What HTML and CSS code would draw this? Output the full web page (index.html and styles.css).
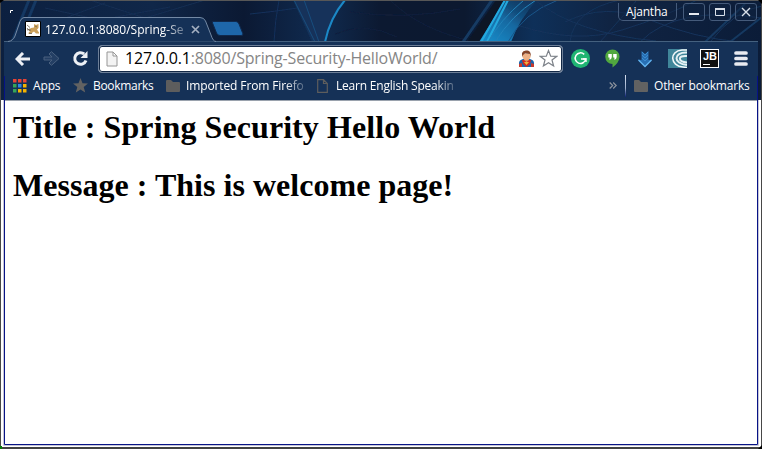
FILE: index.html
```html
<!DOCTYPE html>
<html lang="en">
<head>
<meta charset="utf-8">
<title>127.0.0.1:8080/Spring-Security-HelloWorld/</title>
<link rel="stylesheet" href="styles.css">
</head>
<body>
<div class="window">
  <svg class="wallpaper" width="762" height="100" viewBox="0 0 762 100">
    <defs>
      <linearGradient id="sky"><stop offset="0" stop-color="#0c2040"/><stop offset=".2" stop-color="#102749"/><stop offset=".32" stop-color="#0b1933"/><stop offset=".42" stop-color="#102b50"/><stop offset=".5" stop-color="#0c1931"/><stop offset=".61" stop-color="#0c1930"/><stop offset=".7" stop-color="#0e3059"/><stop offset=".8" stop-color="#102443"/><stop offset="1" stop-color="#0b1c38"/></linearGradient>
      <linearGradient id="ray" x1="0" y1="1" x2="1" y2="0"><stop offset="0" stop-color="#1a91d0"/><stop offset=".5" stop-color="#1668a0"/><stop offset="1" stop-color="#14426f" stop-opacity=".2"/></linearGradient>
      <filter id="soft"><feGaussianBlur stdDeviation=".7"/></filter>
    </defs>
    <rect width="762" height="100" fill="url(#sky)"/>
    <g fill="none" filter="url(#soft)">
      <path d="M12 42L29 0M19 42L36 0" stroke="#123762" stroke-width="3"/>
      <path d="M45 8L100 20 170 7M90 0L145 18 205 0M60 20L105 3" stroke="#152e53"/>
      <path d="M274 42Q275 20 279 0M250 14Q300 9 340 0" stroke="#14305a"/>
      <path d="M293 0L312 42H326Q329 20 344 0Z" fill="#12325a"/>
      <path d="M294 0L315 42M304 0L319 42" stroke="#184d7e"/>
      <path d="M325 42Q330 18 345 0" stroke="#1b88c6" stroke-width="2"/>
      <path d="M350 12Q405 20 460 9M335 34Q365 21 397 37M390 0Q420 30 475 42" stroke="#101f3d"/>
      <path d="M463 42L492 0" stroke="#153a64" stroke-width="3"/>
      <path d="M467 42L496 0H504L480 42Z" fill="#0b1428"/>
      <path d="M479 42L505 0H537Q519 20 511 42Z" fill="url(#ray)"/>
      <path d="M481 42L505 0M487 42L508 0" stroke="#23a9df" stroke-width="2"/>
      <path d="M495 42Q512 15 536 0M488 42Q500 20 524 0" stroke="#2282b9"/>
      <path d="M508 42Q523 13 558 0" stroke="#1a5488"/>
      <path d="M520 26Q577 44 622 30T697 0M535 0Q575 33 656 41M570 42Q573 10 620 0M640 42Q676 5 762 18M565 22Q605 2 650 20T740 42M600 42L637 0M710 42Q735 10 762 6" stroke="#15335b"/>
      <path d="M705 42L745 4M730 42L762 17" stroke="#143961" stroke-width="2"/>
    </g>
  </svg>
  <header class="titlebar">
    <div class="tab">
      <svg class="tab-shape" width="208" height="25" viewBox="0 0 208 25"><path d="M0 24.500Q5 24 7 19L12 4.500Q13.500.5 16 .5H192Q196 .5 197.500 4L203 18Q205 24.500 208 24.500" fill="#153157" stroke="#7389a5"/></svg>
      <svg class="favicon" width="16" height="16" viewBox="0 0 16 16"><path d="M.5.5H15.500V15.500H.5Z" fill="#fff" stroke="#000"/><path d="M3.500 9L6 7 9 6.500 9 3 11 4 13.500 3V7L12 8.500 14 11.500V12.500H11L9 10.500 6 12.500H3L5 10Z" fill="#cba05a"/><path d="M2 4L5 6.500M2 9L5 8M4 12.500H7M10 5L12 6M2 7Q4 11 6 9" stroke="#6c6250" stroke-width=".8" fill="none"/></svg>
      <span class="tab-title">127.0.0.1:8080/Spring-Se</span>
      <svg class="tab-close" width="9" height="9" viewBox="0 0 9 9"><path d="M1 1L8 8M8 1L1 8" stroke="#a3afc0" stroke-width="1.700"/></svg>
    </div>
    <svg class="new-tab" width="32" height="15" viewBox="0 0 32 15"><path d="M1 .5H24Q26 .5 27 3L31 13Q31 14.500 29 14.500H8Q5.500 14.500 4.500 12L.5 2Q0 .5 1 .5Z" fill="#1e67aa" stroke="#10294d"/></svg>
    <div class="controls">
      <div class="user"><span class="t-user">Ajantha</span></div>
      <div class="control"><svg width="22" height="16"><path d="M6 10H16" stroke="#e5e9ef" stroke-width="2"/></svg></div>
      <div class="control"><svg width="22" height="16"><path d="M6.500 4.500H15.500V11.500H6.500Z" fill="none" stroke="#d9e0e9"/><path d="M6 5H16" stroke="#d9e0e9" stroke-width="2"/></svg></div>
      <div class="control"><svg width="22" height="16"><path d="M7 4L15 12M15 4L7 12" stroke="#d9e0e9" stroke-width="1.400"/></svg></div>
    </div>
  </header>
  <nav class="chrome">
    <div class="toolbar">
      <svg class="back" width="16" height="14" viewBox="0 0 16 14"><path d="M15 7H3M8 1L2 7 8 13" fill="none" stroke="#edf0f5" stroke-width="3"/></svg>
      <svg class="forward" width="17" height="15" viewBox="0 0 17 15"><path d="M1 6H9L6 3 8.500.7 16 7.500 8.500 14.300 6 12 9 9H1Z" fill="#243f64" stroke="#4a617f"/></svg>
      <svg class="reload" width="17" height="17" viewBox="0 0 17 17"><path d="M12.200 4A5.800 5.800 0 1 0 14 10.500" fill="none" stroke="#edf0f5" stroke-width="3"/><path d="M15.500 1V8H8.500Z" fill="#edf0f5"/></svg>
      <div class="omnibox">
        <svg class="page" width="12" height="16" viewBox="0 0 12 16"><path d="M1 1H7L11 5V15H1ZM7 1V5H11" fill="#f3f3f3" stroke="#969696"/></svg>
        <span class="url"><b>127.0.0.1</b>:8080/Spring-Security-HelloWorld/</span>
        <svg class="hero" width="17" height="18" viewBox="0 0 17 18"><path d="M1 17V13Q1 10 5 9H12Q16 10 16 13V17Z" fill="#1764ae"/><path d="M1 14L4 13V17H1ZM13 13L16 14V17H13Z" fill="#c83a2e"/><path d="M4 10H13L12 14 8.500 17 5 14Z" fill="#cf2922"/><path d="M6 12H11L8.500 15Z" fill="#efb23b"/><path d="M6 8H11V10L8.500 12 6 10Z" fill="#d69465"/><path d="M4.500 4H12.500V7Q12 10 8.500 10T4.500 7Z" fill="#edb186"/><path d="M4 7V3Q5 0 9 .5 13 0 13 7L12 4 7 3.500 5 5Z" fill="#84452a"/></svg>
        <svg class="star" width="19" height="19" viewBox="0 0 19 19"><path d="M9.500 1.500L11.700 7.200 17.800 7.300 13 11 14.600 17 9.500 13.700 4.400 17 6 11 1.200 7.300 7.300 7.200Z" fill="#fff" stroke="#7d8289" stroke-width="1.200"/></svg>
      </div>
      <div class="extensions">
        <svg width="19" height="19" viewBox="0 0 19 19"><circle cx="9.500" cy="9.500" r="9.500" fill="#20b573"/><path d="M13.200 5.400A5.300 5.300 0 1 0 14.700 10H10" fill="none" stroke="#fff" stroke-width="1.500"/><path d="M12 10H15V13" fill="none" stroke="#fff" stroke-width="1.400"/></svg>
        <svg width="15" height="19" viewBox="0 0 15 19"><path d="M7.500.5A7 7 0 0 1 14.500 8Q14 14 7.500 18.500V15A7 7 0 0 1 7.500.5Z" fill="#51a83f"/><path d="M3.300 5H6.800V8Q6.800 10 4.500 11V8.500H3.300ZM8.200 5H11.700V8Q11.700 10 9.400 11V8.500H8.200Z" fill="#fff"/></svg>
        <svg width="16" height="18" viewBox="0 0 16 18"><path d="M4.500 1L8 4 11.500 1V10L15 9.500 8 17 1 9.500 4.500 10Z" fill="#286fb4"/><path d="M5 2L8 5 11 2M5 5L8 8 11 5M5 8L8 11 11 8" fill="none" stroke="#3a8bd0"/><path d="M1.500 10L8 16.500 14.500 10" fill="none" stroke="#62b4f0" stroke-width="1.300"/></svg>
        <svg width="19" height="19" viewBox="0 0 19 19"><path d="M0 0H19V19H0Z" fill="#40869a"/><path d="M19 1H14C1 2 2 17 15 18L19 18.500" fill="none" stroke="#f2f8f9" stroke-width="1.600"/><path d="M19 3.500C5 3 5 15 19 16M19 7C9 6 10 13 19 13.500" fill="none" stroke="#e5f1f4" stroke-width="2"/></svg>
        <div class="jb"><span>JB</span><i></i></div>
        <svg width="14" height="15" viewBox="0 0 14 15"><path d="M2 2H12M2 7.500H12M2 13H12" stroke="#e9ebf1" stroke-width="3.700" stroke-linecap="round"/></svg>
      </div>
    </div>
    <div class="bookmarks">
      <a class="bm apps"><svg width="14" height="14" viewBox="0 0 14 14"><path d="M0 0H3.500V3.500H0ZM5 0H8.500V3.500H5ZM10 0H13.500V3.500H10Z" fill="#e84335"/><path d="M0 5H3.500V8.500H0ZM0 10H3.500V13.500H0Z" fill="#36a558"/><path d="M5 5H8.500V8.500H5Z" fill="#3288e5"/><path d="M10 5H13.500V8.500H10ZM5 10H8.500V13.500H5ZM10 10H13.500V13.500H10Z" fill="#f5b400"/></svg><span class="t-apps">Apps</span></a>
      <a class="bm marks"><svg width="15" height="15" viewBox="0 0 15 15"><path d="M7.500 0L9.500 5.300 15 5.500 10.700 9 12.200 14.500 7.500 11.400 2.800 14.500 4.300 9 0 5.500 5.500 5.300Z" fill="#626262"/></svg><span class="t-marks">Bookmarks</span></a>
      <a class="bm imported"><svg width="14" height="12" viewBox="0 0 14 12"><path d="M0 1Q0 0 1 0H5L7 2H13Q14 2 14 3V11Q14 12 13 12H1Q0 12 0 11Z" fill="#5d5d5d"/></svg><span class="t-imported fade">Imported From Firefo</span></a>
      <a class="bm learn"><svg width="11" height="14" viewBox="0 0 11 14"><path d="M.7.7H6.500L10.300 4.500V13.300H.7ZM6.500.7V4.500H10.300" fill="none" stroke="#5d5d5d" stroke-width="1.200"/></svg><span class="t-learn fade">Learn English Speakin</span></a>
      <svg class="more" width="8" height="7" viewBox="0 0 8 7"><path d="M.7.5L3.700 3.500.7 6.500M4.200.5L7.200 3.500 4.200 6.500" fill="none" stroke="#8c939d" stroke-width="1.200"/></svg>
      <i class="divider"></i>
      <a class="bm other"><svg width="14" height="12" viewBox="0 0 14 12"><path d="M0 1Q0 0 1 0H5L7 2H13Q14 2 14 3V11Q14 12 13 12H1Q0 12 0 11Z" fill="#626262"/></svg><span class="t-other">Other bookmarks</span></a>
    </div>
  </nav>
  <main class="content">
    <h1 class="title">Title : Spring Security Hello World</h1>
    <h1 class="message">Message : This is welcome page!</h1>
  </main>
  <svg class="frame" width="762" height="449" viewBox="0 0 762 449"><path d="M0 .5H762" stroke="#575757"/><path d="M.5 1V449M761.500 1V449" stroke="#484848"/><path d="M0 448H762" stroke="#424242" stroke-width="2"/><path d="M3.500 100V445.500H758.500V100" fill="none" stroke="#c6c6d8"/><path d="M4.500 76V444.500H757.500V76" fill="none" stroke="#071386"/><path d="M0 0H4L0 3ZM762 0H758L762 4ZM762 445V449H758Z" fill="#000"/><path d="M0 446H2V449H0Z" fill="#057b08"/><path d="M10.500 13V10.500H13" stroke="#fff" fill="none"/></svg>
</div>
</body>
</html>
```
FILE: styles.css
```css
* { box-sizing: border-box; }
body { margin: 0; overflow: hidden; }
svg { display: block; flex: none; }
.window { position: relative; width: 762px; height: 449px; background: #fff; }
.wallpaper, .frame { position: absolute; top: 0; left: 0; }
.titlebar { position: relative; display: flex; height: 41px; font-family: "Open Sans", sans-serif; }
.tab { position: relative; z-index: 2; display: flex; align-items: center; width: 208px; height: 25px; margin: 17px 0 0 8px; padding: 0 0 1px 17px; }
.tab-shape { position: absolute; top: 0; left: 0; }
.favicon { position: relative; }
.tab-title { position: relative; width: 140px; margin-left: 4px; font-size: 12px; white-space: nowrap; color: #fff; -webkit-mask-image: linear-gradient(90deg, #000 84%, rgba(0,0,0,.3)); mask-image: linear-gradient(90deg, #000 84%, rgba(0,0,0,.3)); }
.tab-close { position: relative; margin-left: 6px; }
.new-tab { margin: 21px 0 0 -4px; }
.controls { display: flex; gap: 4px; margin: 3px 5px 0 auto; }
.user, .control { height: 18px; border: 1px solid #455b7b; border-radius: 3px; background: rgba(16,35,65,.5); }
.user { width: 59px; margin-right: 2px; padding-left: 7px; border-top: 0; border-radius: 0 0 5px 5px; color: #fff; font-size: 12px; line-height: 17px; }
.t-user { letter-spacing: -.2px; }
.control { width: 22px; overflow: hidden; }
.control svg { margin-left: -1px; }
.chrome { position: relative; width: 754px; height: 60px; margin-left: 4px; background: #153157; border-top: 1px solid #45617f; border-bottom: 1px solid #9aa2ad; font-family: "Open Sans", sans-serif; }
.toolbar { display: flex; align-items: center; height: 33px; padding-left: 11px; }
.forward { margin-left: 12px; }
.reload { margin-left: 12px; }
.omnibox { display: flex; align-items: center; width: 465px; height: 28px; margin-left: 9px; padding-left: 7px; background: #fff; border: 1px solid #6d7f98; border-radius: 4px; box-shadow: inset 0 0 0 1px #122745; }
.url { width: 312px; margin-left: 7px; padding-bottom: 1px; font-size: 16px; letter-spacing: -.2px; white-space: nowrap; color: #858585; }
.url b { font-weight: 400; color: #000; }
.hero { margin-left: 81px; }
.star { margin-left: 4px; }
.extensions { display: flex; align-items: center; margin-left: 8px; }
.extensions > :nth-child(2) { margin-left: 15px; }
.extensions > :nth-child(3) { margin-left: 17px; }
.extensions > :nth-child(4) { margin-left: 15px; }
.extensions > :nth-child(5) { margin-left: 13px; }
.extensions > :nth-child(6) { margin-left: 15px; }
.jb { width: 19px; height: 19px; padding: 2px; background: #101010; border: 1px solid #fff; color: #fff; font: bold 11px/9px "Liberation Sans", sans-serif; }
.jb span { display: block; }
.jb i { display: block; width: 7px; height: 1px; margin-top: 3px; background: #fff; }
.bookmarks { display: flex; align-items: center; height: 21px; padding-left: 9px; font-size: 12px; color: #fff; }
.bm { display: flex; align-items: center; white-space: nowrap; }
.apps { width: 60px; gap: 6px; }
.marks { width: 93px; gap: 5px; }
.imported { width: 151px; gap: 6px; }
.learn { width: 137px; gap: 8px; }
.t-apps { letter-spacing: -.15px; }
.t-marks { letter-spacing: -.3px; }
.t-imported { letter-spacing: -.12px; }
.t-learn { letter-spacing: -.2px; }
.t-other { letter-spacing: -.2px; }
.fade { -webkit-mask-image: linear-gradient(90deg, #000 84%, rgba(0,0,0,.25)); mask-image: linear-gradient(90deg, #000 84%, rgba(0,0,0,.25)); }
.more { margin-left: 155px; }
.divider { width: 1px; height: 22px; margin-left: 8px; background: linear-gradient(#d6e0ef, #9daecb 60%, #102276); }
.other { margin-left: 8px; gap: 6px; }
.content { position: relative; margin: 0 5px; padding: 8px; color: #000; font-family: "Liberation Serif", serif; }
h1 { margin: 0 0 21.44px; font-size: 32px; line-height: 37px; }
.title { letter-spacing: .07px; }
.message { letter-spacing: .03px; }
```
